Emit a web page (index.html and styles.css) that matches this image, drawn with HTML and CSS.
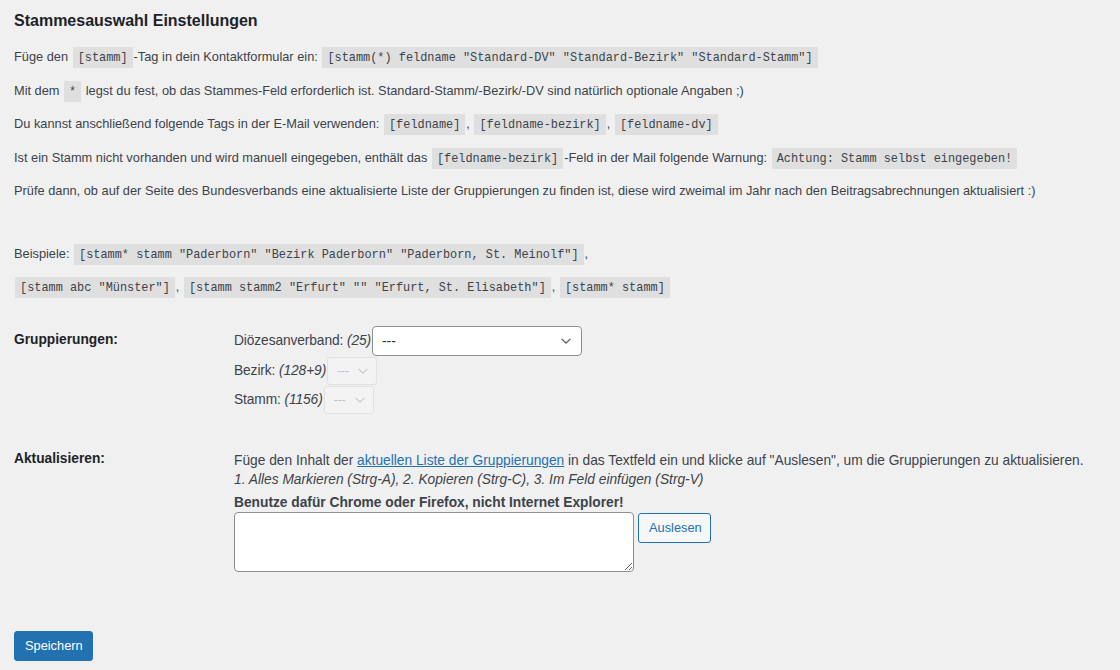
FILE: index.html
```html
<!DOCTYPE html>
<html lang="de">
<head>
<meta charset="utf-8">
<title>Stammesauswahl Einstellungen</title>
<link rel="stylesheet" href="styles.css">
</head>
<body>
<div class="wrap">
  <h2 class="title">Stammesauswahl Einstellungen</h2>
  <p>Füge den <code>[stamm]</code>-Tag in dein Kontaktformular ein: <code>[stamm(*) feldname "Standard-DV" "Standard-Bezirk" "Standard-Stamm"]</code></p>
  <p>Mit dem <code>*</code> legst du fest, ob das Stammes-Feld erforderlich ist. Standard-Stamm/-Bezirk/-DV sind natürlich optionale Angaben ;)</p>
  <p>Du kannst anschließend folgende Tags in der E-Mail verwenden: <code>[feldname]</code>, <code>[feldname-bezirk]</code>, <code>[feldname-dv]</code></p>
  <p>Ist ein Stamm nicht vorhanden und wird manuell eingegeben, enthält das <code>[feldname-bezirk]</code>-Feld in der Mail folgende Warnung: <code>Achtung: Stamm selbst eingegeben!</code></p>
  <p>Prüfe dann, ob auf der Seite des Bundesverbands eine aktualisierte Liste der Gruppierungen zu finden ist, diese wird zweimal im Jahr nach den Beitragsabrechnungen aktualisiert :)</p>
  <div class="spacer"></div>
  <p>Beispiele: <code>[stamm* stamm "Paderborn" "Bezirk Paderborn" "Paderborn, St. Meinolf"]</code>,</p>
  <p><code>[stamm abc "Münster"]</code>, <code>[stamm stamm2 "Erfurt" "" "Erfurt, St. Elisabeth"]</code>, <code>[stamm* stamm]</code></p>

  <form class="settings">
    <table class="form-table">
      <tbody>
        <tr>
          <th scope="row">Gruppierungen:</th>
          <td>
            <div class="pick-line">
              <label>Diözesanverband: <i>(25)</i></label>
              <select class="select select-dv"><option>---</option></select>
            </div>
            <div class="pick-line">
              <label>Bezirk: <i>(128+9)</i></label>
              <select class="select select-off" disabled><option>---</option></select>
            </div>
            <div class="pick-line">
              <label>Stamm: <i>(1156)</i></label>
              <select class="select select-off" disabled><option>---</option></select>
            </div>
          </td>
        </tr>
        <tr>
          <th scope="row" class="th-update">Aktualisieren:</th>
          <td class="td-update">
            <div class="desc">Füge den Inhalt der <a href="#">aktuellen Liste der Gruppierungen</a> in das Textfeld ein und klicke auf "Auslesen", um die Gruppierungen zu aktualisieren.<br><i>1. Alles Markieren (Strg-A), 2. Kopieren (Strg-C), 3. Im Feld einfügen (Strg-V)</i></div>
            <p class="warn"><b>Benutze dafür Chrome oder Firefox, nicht Internet Explorer!</b></p>
            <div class="import-row">
              <textarea class="import-text"></textarea>
              <button type="button" class="button button-secondary">Auslesen</button>
            </div>
          </td>
        </tr>
      </tbody>
    </table>
    <p class="submit"><button type="button" class="button button-primary">Speichern</button></p>
  </form>
</div>
</body>
</html>
```
FILE: styles.css
```css
html, body {
  margin: 0;
  padding: 0;
  background: #f0f0f1;
}

body {
  color: #3c434a;
  font-family: "Liberation Sans", Arial, sans-serif;
  font-size: 12.8px;
  line-height: 1.4em;
}

.wrap {
  padding: 0 14px;
}

h2.title {
  font-size: 16px;
  font-weight: 600;
  line-height: 22px;
  color: #1d2327;
  margin: 10px 0 15px;
}

p {
  font-size: 12.8px;
  line-height: 20.5px;
  margin: 13px 0;
}

code {
  font-family: "Liberation Mono", "DejaVu Sans Mono", monospace;
  font-size: 11.9px;
  line-height: 1;
  padding: 4px 5px 3px;
  margin: 0 1px;
  background: rgba(0, 0, 0, 0.07);
  color: #3c434a;
}

.spacer {
  height: 16px;
}

.form-table {
  border-collapse: collapse;
  margin-top: 6.5px;
  width: 100%;
  clear: both;
}

.form-table th {
  width: 200px;
  padding: 20px 10px 20px 0;
  text-align: left;
  vertical-align: top;
  font-size: 13.75px;
  line-height: 18px;
  font-weight: 600;
  color: #1d2327;
}

.form-table td {
  padding: 15px 0 15px 10px;
  font-size: 13.75px;
  line-height: 1.3;
  vertical-align: middle;
  color: #3c434a;
}

.pick-line {
  display: flex;
  align-items: center;
  min-height: 29px;
}

.pick-line:first-child {
  min-height: 31px;
}

.pick-line label {
  margin-right: 0;
  letter-spacing: -0.1px;
}

.select {
  -webkit-appearance: none;
  appearance: none;
  font-family: "Liberation Sans", Arial, sans-serif;
  font-size: 13.75px;
  color: #2c3338;
  background-color: #fff;
  background-image: url("data:image/svg+xml;utf8,<svg xmlns='http://www.w3.org/2000/svg' viewBox='0 0 16 16'><polyline points='3,5.5 8,10.5 13,5.5' fill='none' stroke='%2350575e' stroke-width='1.4'/></svg>");
  background-repeat: no-repeat;
  background-size: 14px 14px;
  border: 1px solid #8c8f94;
  border-radius: 4px;
  box-sizing: border-box;
  margin: 0 1px;
  cursor: pointer;
}

.select-dv {
  width: 210px;
  height: 30px;
  padding: 0 24px 0 9px;
  background-position: right 8px center;
}

.select-off {
  width: 50px;
  height: 28px;
  padding: 0 0 0 9px;
  font-size: 12px;
  color: #a7aaad;
  border-color: #dcdcde;
  background-color: rgba(255, 255, 255, 0.35);
  background-image: url("data:image/svg+xml;utf8,<svg xmlns='http://www.w3.org/2000/svg' viewBox='0 0 16 16'><polyline points='3,5.5 8,10.5 13,5.5' fill='none' stroke='%23b4b7ba' stroke-width='1.2'/></svg>");
  background-position: right 6px center;
  border-radius: 3px;
  cursor: default;
}

.th-update {
  padding-top: 21px;
}

.td-update {
  line-height: 19px;
}

.desc {
  margin-top: 6px;
  line-height: 19px;
}

.form-table td p.warn {
  font-size: 13.75px;
  line-height: 19px;
  margin: 4px 0 0;
}

.warn b {
  font-weight: 600;
  color: #3c434a;
}

a {
  color: #2271b1;
  text-decoration: underline;
}

.import-row {
  display: flex;
  align-items: flex-start;
  gap: 4px;
  margin-top: 0;
}

.import-text {
  width: 400px;
  height: 60px;
  box-sizing: border-box;
  border: 1px solid #8c8f94;
  border-radius: 4px;
  background: #fff;
  padding: 2px 6px;
  margin: 0;
  font-family: "Liberation Sans", Arial, sans-serif;
  font-size: 14px;
  resize: both;
}

.button {
  font-family: "Liberation Sans", Arial, sans-serif;
  font-size: 12.8px;
  line-height: 28px;
  min-height: 30px;
  box-sizing: border-box;
  padding: 0 10px;
  border-radius: 3px;
  border: 1px solid #2271b1;
  cursor: pointer;
}

.button-secondary {
  margin-top: 1px;
  width: 73px;
  color: #2271b1;
  background: #f6f7f7;
  border-color: #2271b1;
}

.button-primary {
  width: 79px;
  color: #fff;
  background: #2271b1;
  border-color: #2271b1;
}

.submit {
  margin: 0;
  padding-top: 44px;
}
```
